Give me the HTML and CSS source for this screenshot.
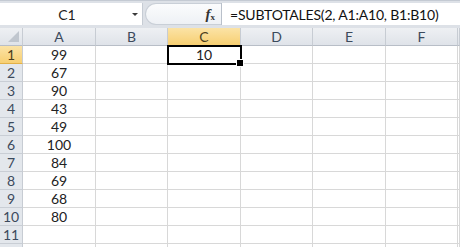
FILE: index.html
```html
<!DOCTYPE html>
<html lang="es">
  <head>
    <meta charset="UTF-8" />
    <title>SUBTOTALES</title>
    <link rel="stylesheet" href="styles.css">
  </head>
  <body>
    <div class="formula-bar">
      <div class="name-box">
        <span class="name">C1</span>
        <span class="arrow"></span>
      </div>
      <div class="buttons">
        <span class="fx"><i>f</i><sub>x</sub></span>
      </div>
      <div class="formula">=SUBTOTALES(2, A1:A10, B1:B10)</div>
    </div>
    <div id="grid" class="grid">
      <div class="corner"><span class="tri"></span></div>
      <div class="col-head">A</div>
      <div class="col-head">B</div>
      <div class="col-head selected">C</div>
      <div class="col-head">D</div>
      <div class="col-head">E</div>
      <div class="col-head">F</div>
      <div class="col-head"></div>
    </div>
    <script>
      let values = [99, 67, 90, 43, 49, 100, 84, 69, 68, 80];
      let grid = document.getElementById('grid');

      // row 12 only peeks in at the bottom edge, so it gets no label
      for (let r = 1; r <= 12; r++) {
        let head = document.createElement('div');
        head.className = 'row-head' + (r === 1 ? ' selected' : '');
        head.textContent = r < 12 ? r : '';
        grid.appendChild(head);

        for (let c = 0; c < 7; c++) {
          let cell = document.createElement('div');
          cell.className = 'cell';
          if (c === 0 && values[r - 1] !== undefined) {
            cell.textContent = values[r - 1];
          }
          if (c === 2 && r === 1) {
            cell.textContent = '10';
            cell.classList.add('active');
          }
          grid.appendChild(cell);
        }
      }
    </script>
  </body>
</html>
```

FILE: styles.css
```css
* {
  box-sizing: border-box;
}
html,
body {
  margin: 0;
  width: 460px;
  height: 247px;
  overflow: hidden;
  background: #fff;
  font-family: Lato, "Liberation Sans", sans-serif;
  font-size: 14px;
  color: #222;
}
.formula-bar {
  display: flex;
  height: 28px;
  padding: 2px 0 3px 0;
  background: #dde1e7;
  border-top: 1px solid #c4cad3;
}
.name-box {
  position: relative;
  width: 143px;
  background: #fff;
  border-right: 1px solid #c6ccd4;
  display: flex;
  align-items: center;
  justify-content: center;
}
.name {
  color: #1e1e1e;
  padding-right: 8px;
}
.arrow {
  position: absolute;
  right: 4px;
  top: 10px;
  border-left: 3px solid transparent;
  border-right: 3px solid transparent;
  border-top: 3px solid #3a3a3a;
}
.buttons {
  width: 76px;
  margin-left: 2px;
  background: linear-gradient(#fbfcfd, #eef1f5);
  border: 1px solid #c9cfd7;
  border-right: none;
  border-radius: 11px 0 0 11px;
  display: flex;
  align-items: center;
  justify-content: flex-end;
  padding-right: 6px;
}
.fx {
  font-family: "Liberation Serif", serif;
  font-size: 15px;
  font-weight: bold;
  color: #333;
  line-height: 1;
}
.fx sub {
  font-size: 9px;
  vertical-align: -1px;
}
.formula {
  flex: 1;
  background: #fff;
  border-left: 1px solid #b9c0ca;
  padding-left: 8px;
  display: flex;
  align-items: center;
  color: #111;
  white-space: nowrap;
  letter-spacing: -0.2px;
}
.grid {
  display: grid;
  grid-template-columns: 23px 73px 72px 73px 72px 73px 72px 1fr;
  grid-auto-rows: 18px;
}
.corner,
.col-head,
.row-head {
  background: linear-gradient(#eef0f3, #dfe3e9);
  color: #3c4a5c;
  border-right: 1px solid #c7ccd3;
  border-bottom: 1px solid #b8bec7;
  display: flex;
  align-items: center;
  justify-content: center;
  font-size: 14px;
}
.corner {
  position: relative;
}
.tri {
  position: absolute;
  right: 3px;
  bottom: 3px;
  border-left: 11px solid transparent;
  border-bottom: 11px solid #c0c6ce;
}
.row-head {
  background: #e3e7ec;
  border-bottom: 1px solid #c9ced5;
}
.col-head.selected,
.row-head.selected {
  background: linear-gradient(#fbe3a6, #f7cf72);
  color: #4a3e1c;
  border-bottom: 1px solid #e2b148;
}
.cell {
  border-right: 1px solid #d8d8d8;
  border-bottom: 1px solid #d8d8d8;
  display: flex;
  align-items: center;
  justify-content: center;
  color: #222;
}
.cell.active {
  position: relative;
  z-index: 1;
  outline: 2px solid #000;
  outline-offset: -1px;
}
.cell.active::after {
  content: '';
  position: absolute;
  right: -4px;
  bottom: -4px;
  width: 6px;
  height: 6px;
  background: #000;
  border: 1px solid #fff;
}
```
